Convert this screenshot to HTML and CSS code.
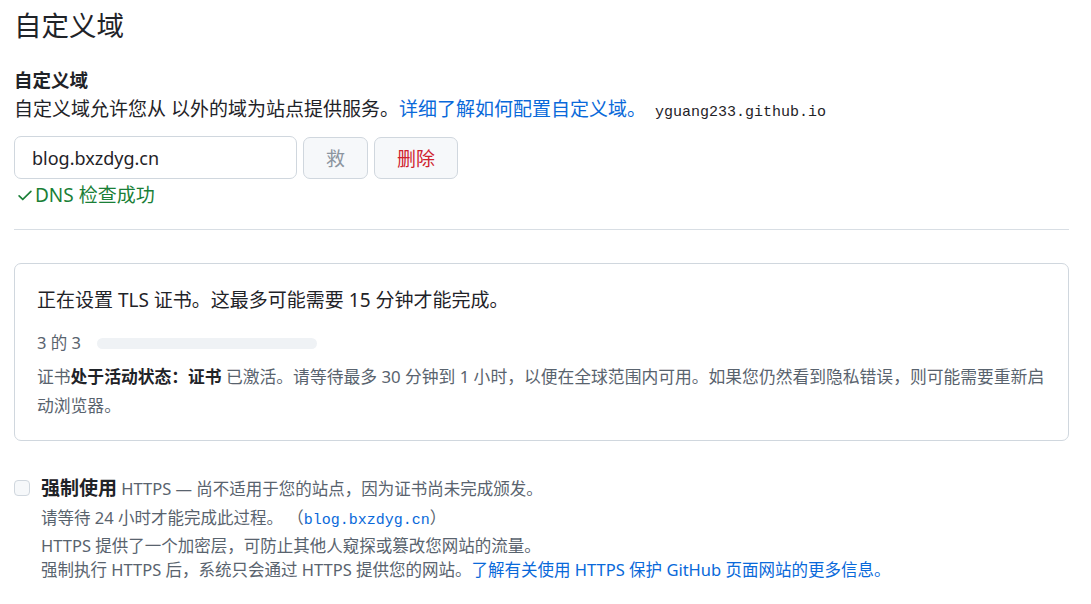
FILE: index.html
```html
<!DOCTYPE html>
<html lang="zh-CN">
<head>
    <meta charset="UTF-8">
    <meta name="viewport" content="width=device-width, initial-scale=1.0">
    <title>自定义域</title>
    <link rel="stylesheet" href="styles.css">
</head>
<body>
    <div class="page">
        <h2 class="page-title">自定义域</h2>

        <div class="domain-section">
            <h3 class="section-title">自定义域</h3>
            <p class="section-desc">
                自定义域允许您从 以外的域为站点提供服务。<a href="#">详细了解如何配置自定义域。</a><code>yguang233.github.io</code>
            </p>

            <div class="domain-form">
                <input type="text" class="domain-input" value="blog.bxzdyg.cn">
                <button class="btn" disabled>救</button>
                <button class="btn btn-danger">删除</button>
            </div>

            <div class="dns-ok">
                <svg width="18" height="18" viewBox="0 0 16 16" fill="currentColor"><path d="M13.78 4.22a.75.75 0 0 1 0 1.06l-7.25 7.25a.75.75 0 0 1-1.06 0L2.22 9.28a.751.751 0 0 1 .018-1.042.751.751 0 0 1 1.042-.018L6 10.94l6.72-6.72a.75.75 0 0 1 1.06 0Z"></path></svg>
                <span>DNS 检查成功</span>
            </div>
        </div>

        <div class="tls-box">
            <p class="tls-title">正在设置 TLS 证书。这最多可能需要 15 分钟才能完成。</p>
            <div class="tls-progress">
                <span class="step">3 的 3</span>
                <div class="bar"></div>
            </div>
            <p class="tls-note">证书<strong>处于活动状态：证书</strong> 已激活。请等待最多 30 分钟到 1 小时，以便在全球范围内可用。如果您仍然看到隐私错误，则可能需要重新启动浏览器。</p>
        </div>

        <div class="https-row">
            <span class="checkbox"></span>
            <div class="https-body">
                <div class="https-label"><strong>强制使用</strong> HTTPS — 尚不适用于您的站点，因为证书尚未完成颁发。</div>
                <div class="https-wait">请等待 24 小时才能完成此过程。 （<code>blog.bxzdyg.cn</code>）</div>
                <p class="https-note">HTTPS 提供了一个加密层，可防止其他人窥探或篡改您网站的流量。<br>强制执行 HTTPS 后，系统只会通过 HTTPS 提供您的网站。<a href="#">了解有关使用 HTTPS 保护 GitHub 页面网站的更多信息。</a></p>
            </div>
        </div>
    </div>
</body>
</html>
```

FILE: styles.css
```css
body {
    margin: 0;
    font-family: "Noto Sans", "Noto Sans CJK SC", sans-serif;
    color: #1f2328;
    background: #ffffff;
}

.page {
    padding: 10px 22px 0 14px;
}

a {
    color: #0969da;
    text-decoration: none;
}

code {
    font-family: "Liberation Mono", "DejaVu Sans Mono", monospace;
    font-size: 15px;
}

.page-title {
    font-size: 27.5px;
    font-weight: 400;
    line-height: 32px;
    margin: 0 0 23px;
}

.section-title {
    font-size: 18.5px;
    font-weight: 700;
    line-height: 29px;
    margin: 0;
}

.section-desc {
    font-size: 19px;
    line-height: 29px;
    margin: 1px 0 9px;
}

.section-desc code {
    margin-left: 9px;
}

.domain-form {
    display: flex;
    gap: 6px;
    align-items: center;
}

.domain-input {
    width: 283px;
    height: 43px;
    box-sizing: border-box;
    padding: 0 17px;
    font-family: inherit;
    font-size: 18px;
    color: #1f2328;
    border: 1px solid #d0d7de;
    border-radius: 7px;
    outline: none;
}

.btn {
    height: 42px;
    padding: 0 22px;
    font-family: inherit;
    font-size: 19px;
    color: #1f2328;
    background: #f6f8fa;
    border: 1px solid #d0d7de;
    border-radius: 7px;
}

.btn:disabled {
    color: #8c959f;
}

.btn-danger {
    color: #cf222e;
}

.dns-ok {
    display: flex;
    align-items: center;
    gap: 1px;
    color: #1a7f37;
    font-size: 19px;
    line-height: 26px;
    margin: 3px 0 0 2px;
}

.domain-section {
    padding-bottom: 21px;
    border-bottom: 1px solid #d8dee4;
    margin-bottom: 33px;
}

.tls-box {
    border: 1px solid #d0d7de;
    border-radius: 7px;
    padding: 22px 22px 20px;
}

.tls-title {
    font-size: 19px;
    line-height: 29px;
    margin: 0 0 15px;
}

.tls-progress {
    display: flex;
    align-items: center;
    gap: 16px;
    color: #59636e;
    font-size: 16.5px;
    line-height: 26px;
}

.bar {
    width: 220px;
    height: 11px;
    background: #eff2f5;
    border-radius: 6px;
}

.tls-note {
    color: #59636e;
    font-size: 16.8px;
    line-height: 29px;
    margin: 6px 0 0;
}

.tls-note strong {
    color: #1f2328;
}

.https-row {
    display: flex;
    gap: 11px;
    margin-top: 31px;
}

.checkbox {
    flex: none;
    width: 16px;
    height: 16px;
    box-sizing: border-box;
    margin-top: 8px;
    border: 1px solid #d0d7de;
    border-radius: 4px;
    background: #f6f8fa;
}

.https-label {
    color: #59636e;
    font-size: 16.5px;
    line-height: 32px;
}

.https-label strong {
    color: #1f2328;
    font-size: 19px;
}

.https-wait {
    color: #59636e;
    font-size: 16.5px;
    line-height: 26px;
}

.https-wait code {
    color: #0969da;
}

.https-note {
    color: #59636e;
    font-size: 16.5px;
    line-height: 24px;
    margin: 0;
}
```
